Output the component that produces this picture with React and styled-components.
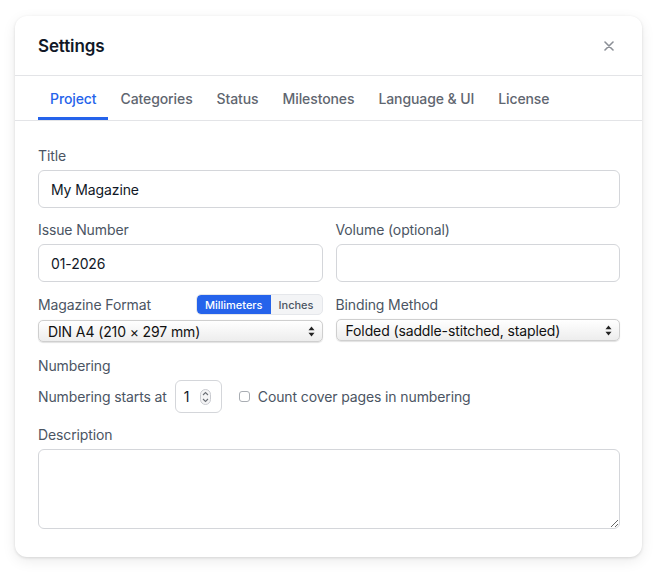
import React, { useState } from "react";
import styled, { createGlobalStyle } from "styled-components";

const GlobalStyle = createGlobalStyle`
  body {
    margin: 0;
    background: #ffffff;
    font-family: Inter, "Noto Sans", sans-serif;
    letter-spacing: -0.12px;
    -webkit-font-smoothing: antialiased;
  }
`;

const tabs = ["Project", "Categories", "Status", "Milestones", "Language & UI", "License"];

const Arrows = () => (
  <svg width="7" height="11" viewBox="0 0 7 11">
    <path d="M3.5 0.5 L6.5 4.2 H0.5 Z" fill="#222" />
    <path d="M3.5 10.5 L6.5 6.8 H0.5 Z" fill="#222" />
  </svg>
);

const Spinner = () => (
  <svg width="11" height="16" viewBox="0 0 11 16">
    <rect x="0.5" y="0.5" width="10" height="15" rx="5" fill="#f4f4f5" stroke="#c9cbd0" />
    <path d="M3 6 L5.5 3.6 L8 6" fill="none" stroke="#6b6f76" strokeWidth="1.1" />
    <path d="M3 10 L5.5 12.4 L8 10" fill="none" stroke="#6b6f76" strokeWidth="1.1" />
  </svg>
);

const App = () => {
  const [tab, setTab] = useState("Project");
  const [unit, setUnit] = useState("mm");

  return (
    <Page>
      <GlobalStyle />
      <Modal>
        <Header>
          <h2>Settings</h2>
          <Close aria-label="Close">
            <svg width="10" height="10" viewBox="0 0 10 10">
              <path d="M1 1 L9 9 M9 1 L1 9" stroke="#8b8f96" strokeWidth="1.6" strokeLinecap="round" />
            </svg>
          </Close>
        </Header>

        <TabBar>
          {tabs.map((t) => (
            <Tab key={t} $active={t === tab} onClick={() => setTab(t)}>
              {t}
            </Tab>
          ))}
        </TabBar>

        <Body>
          <Field>
            <Label>Title</Label>
            <Input defaultValue="My Magazine" />
          </Field>

          <Columns>
            <Field>
              <Label>Issue Number</Label>
              <Input defaultValue="01-2026" />
            </Field>
            <Field>
              <Label>Volume (optional)</Label>
              <Input defaultValue="" />
            </Field>
          </Columns>

          <Columns>
            <Field $tight>
              <LabelRow>
                <Label>Magazine Format</Label>
                <Segmented>
                  <Segment $active={unit === "mm"} onClick={() => setUnit("mm")}>
                    Millimeters
                  </Segment>
                  <Segment $active={unit === "in"} onClick={() => setUnit("in")}>
                    Inches
                  </Segment>
                </Segmented>
              </LabelRow>
              <Select>
                <span>DIN A4 (210 × 297 mm)</span>
                <Arrows />
              </Select>
            </Field>
            <Field $tight>
              <LabelRow>
                <Label>Binding Method</Label>
              </LabelRow>
              <Select $up>
                <span>Folded (saddle-stitched, stapled)</span>
                <Arrows />
              </Select>
            </Field>
          </Columns>

          <Field>
            <Label>Numbering</Label>
            <NumberRow>
              <Label>Numbering starts at</Label>
              <NumberBox>
                <span>1</span>
                <Spinner />
              </NumberBox>
              <Check>
                <Box />
                Count cover pages in numbering
              </Check>
            </NumberRow>
          </Field>

          <Field>
            <Label>Description</Label>
            <TextArea />
          </Field>
        </Body>
      </Modal>
    </Page>
  );
};

export default App;

const Page = styled.div`
  padding: 16px 17px 17px 15px;
`;

const Modal = styled.div`
  width: 627px;
  background: #fff;
  border-radius: 12px;
  box-shadow: 0 1px 3px rgba(0, 0, 0, 0.12), 0 4px 14px rgba(0, 0, 0, 0.08);
`;

const Header = styled.div`
  height: 59px;
  display: flex;
  align-items: center;
  justify-content: space-between;
  padding: 0 24px 0 23px;
  border-bottom: 1px solid #e3e4e7;

  h2 {
    margin: 0;
    font-size: 17px;
    font-weight: 600;
    color: #111827;
    padding-top: 1px;
  }
`;

const Close = styled.button`
  border: none;
  background: none;
  padding: 4px;
  display: flex;
  cursor: pointer;
`;

const TabBar = styled.div`
  display: flex;
  padding: 0 23px;
  border-bottom: 1px solid #e3e4e7;
`;

const Tab = styled.button`
  border: none;
  background: none;
  font-family: inherit;
  letter-spacing: -0.1px;
  font-size: 14px;
  font-weight: 500;
  line-height: 20px;
  padding: 13px 12px 8px;
  color: ${(p) => (p.$active ? "#2563eb" : "#5f6670")};
  border-bottom: 3px solid ${(p) => (p.$active ? "#2563eb" : "transparent")};
  cursor: pointer;
`;

const Body = styled.div`
  padding: 25px 22px 28px 23px;
  display: flex;
  flex-direction: column;
  gap: 12px;
`;

const Columns = styled.div`
  display: grid;
  grid-template-columns: 1fr 1fr;
  gap: 13px;
`;

const Field = styled.div`
  display: flex;
  flex-direction: column;
  gap: ${(p) => (p.$tight ? "5px" : "4px")};
`;

const Label = styled.label`
  font-size: 14px;
  line-height: 20px;
  color: #4b5563;
`;

const LabelRow = styled.div`
  display: flex;
  align-items: center;
  justify-content: space-between;
  height: 21px;
`;

const Input = styled.input`
  height: 38px;
  box-sizing: border-box;
  border: 1px solid #d4d6da;
  border-radius: 6px;
  padding: 0 12px;
  font-family: inherit;
  letter-spacing: -0.1px;
  font-size: 14px;
  color: #111827;
  outline: none;
`;

const Segmented = styled.div`
  display: flex;
  height: 21px;
  border-radius: 5px;
  overflow: hidden;
  background: #f3f4f6;
  border: 1px solid #e5e7eb;
  box-sizing: border-box;
`;

const Segment = styled.button`
  border: none;
  font-family: inherit;
  font-size: 11px;
  font-weight: 500;
  padding: 0 8px;
  background: ${(p) => (p.$active ? "#2563eb" : "transparent")};
  color: ${(p) => (p.$active ? "#fff" : "#4b5563")};
  border-radius: ${(p) => (p.$active ? "4px 0 0 4px" : "0")};
  cursor: pointer;
`;

const Select = styled.div`
  height: 22px;
  box-sizing: border-box;
  margin-top: ${(p) => (p.$up ? "-1px" : "0")};
  margin-bottom: 2px;
  display: flex;
  align-items: center;
  justify-content: space-between;
  padding: 0 7px 0 9px;
  border-radius: 5px;
  border: 1px solid #cfcfcf;
  background: linear-gradient(#ffffff, #ededed);
  box-shadow: 0 0.5px 1px rgba(0, 0, 0, 0.12);
  font-size: 14px;
  color: #111;
`;

const NumberRow = styled.div`
  display: flex;
  align-items: center;
  gap: 8px;
`;

const NumberBox = styled.div`
  width: 47px;
  height: 33px;
  box-sizing: border-box;
  border: 1px solid #d4d6da;
  border-radius: 6px;
  display: flex;
  align-items: center;
  justify-content: space-between;
  padding: 0 10px 0 8px;
  font-size: 14px;
  color: #111827;
`;

const Check = styled.label`
  display: flex;
  align-items: center;
  gap: 8px;
  margin-left: 9px;
  font-size: 14px;
  color: #4b5563;
`;

const Box = styled.span`
  width: 11px;
  height: 11px;
  box-sizing: border-box;
  border: 1px solid #a9adb3;
  border-radius: 3px;
  background: #fff;
`;

const TextArea = styled.textarea`
  height: 80px;
  box-sizing: border-box;
  border: 1px solid #d4d6da;
  border-radius: 6px;
  padding: 8px 12px;
  font-family: inherit;
  font-size: 14px;
  resize: vertical;
  outline: none;
`;
